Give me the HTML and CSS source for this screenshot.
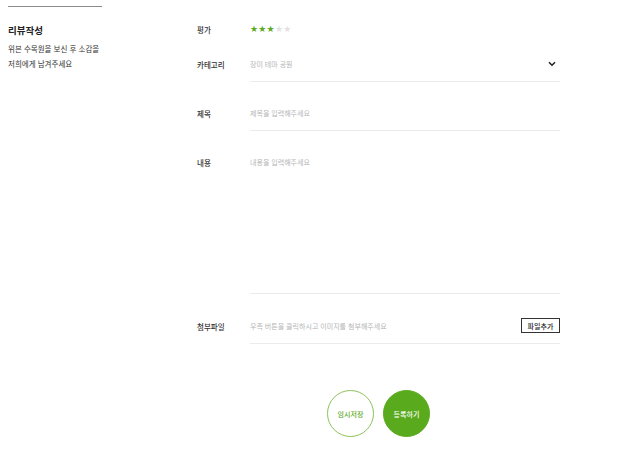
FILE: index.html
```html
<!DOCTYPE html>
<html lang="ko">
<head>
<meta charset="utf-8">
<link rel="stylesheet" href="styles.css">
</head>
<body>
<div class="page">
  <aside class="side">
    <div class="topline"></div>
    <h2 class="side-title">리뷰작성</h2>
    <p class="side-desc">위븐 수목원을 보신 후 소감을<br>저희에게 남겨주세요</p>
  </aside>
  <main class="form">
    <div class="row row-rating">
      <div class="label">평가</div>
      <div class="stars">
        <span class="star on">★</span><span class="star on">★</span><span class="star on">★</span><span class="star">★</span><span class="star">★</span>
      </div>
    </div>
    <div class="row row-field row-cat">
      <div class="label">카테고리</div>
      <div class="field">
        <span class="ph">장미 테마 공원</span>
        <svg class="chev" width="8" height="6" viewBox="0 0 8 6"><path d="M1 1.2 L4 4.2 L7 1.2" fill="none" stroke="#222" stroke-width="1.6"/></svg>
      </div>
    </div>
    <div class="row row-field row-title">
      <div class="label">제목</div>
      <div class="field"><span class="ph">제목을 입력해주세요</span></div>
    </div>
    <div class="row row-content">
      <div class="label">내용</div>
      <div class="field field-area"><span class="ph">내용을 입력해주세요</span></div>
    </div>
    <div class="row row-field row-file">
      <div class="label">첨부파일</div>
      <div class="field">
        <span class="ph">우측 버튼을 클릭하시고 이미지를 첨부해주세요</span>
        <button class="file-btn">파일추가</button>
      </div>
    </div>
    <div class="actions">
      <button class="circle outline">임시저장</button>
      <button class="circle solid">등록하기</button>
    </div>
  </main>
</div>
</body>
</html>
```
FILE: styles.css
```css
* { box-sizing: border-box; }
html, body { margin: 0; padding: 0; background: #fff; }
body {
  font-family: "Noto Sans CJK KR", "Noto Sans", sans-serif;
  color: #333;
  width: 620px;
  height: 465px;
  overflow: hidden;
}
.page {
  display: flex;
  padding-left: 8px;
}
.side {
  width: 189px;
  padding-top: 6px;
}
.topline {
  width: 94px;
  height: 1px;
  background: #8a8a8a;
}
.side-title {
  margin: 16px 0 0;
  font-size: 9.5px;
  line-height: 14px;
  font-weight: 700;
  color: #222;
}
.side-desc {
  margin: 4px 0 0;
  font-size: 7.5px;
  line-height: 15px;
  color: #333;
}
.form {
  width: 363px;
  padding-top: 21px;
}
.row {
  display: flex;
}
.label {
  width: 53px;
  font-size: 7.5px;
  font-weight: 500;
  color: #333;
  flex-shrink: 0;
}
.row-rating {
  height: 16px;
  align-items: center;
}
.stars {
  display: flex;
  gap: 0;
}
.star {
  font-family: "DejaVu Sans", sans-serif;
  font-size: 9px;
  line-height: 10px;
  width: 8.3px;
  color: #e2e2e2;
}
.star.on { color: #5aaa1e; }
.row-field {
  height: 34px;
  align-items: center;
}
.row-cat { margin-top: 11px; }
.row-title { margin-top: 15px; }
.row-field .label { padding-bottom: 1px; }
.field {
  flex: 1;
  height: 100%;
  display: flex;
  align-items: center;
  justify-content: space-between;
  border-bottom: 1px solid #ececec;
  padding-bottom: 1px;
  padding-right: 4px;
}
.ph {
  font-size: 7px;
  color: #b5b5b5;
}
.chev { display: block; }
.row-content {
  margin-top: 16px;
  height: 147px;
  align-items: flex-start;
}
.row-content .label { padding-top: 10px; }
.field-area {
  align-items: flex-start;
  padding-top: 10px;
}
.row-file { margin-top: 16px; }
.row-file .field { padding-right: 0; }
.file-btn {
  width: 39px;
  height: 15px;
  border: 1px solid #333;
  background: #fff;
  font-family: inherit;
  font-size: 7px;
  font-weight: 500;
  color: #222;
  padding: 0;
  margin-bottom: 1px;
}
.actions {
  display: flex;
  justify-content: center;
  gap: 9px;
  margin-top: 46px;
}
.circle {
  width: 47px;
  height: 47px;
  border-radius: 50%;
  font-family: inherit;
  font-size: 7px;
  font-weight: 500;
  padding: 0;
}
.outline {
  border: 1px solid #8ec15a;
  background: #fff;
  color: #5aaa1e;
}
.solid {
  border: 1px solid #5aaa1e;
  background: #5aaa1e;
  color: #fff;
}
```
